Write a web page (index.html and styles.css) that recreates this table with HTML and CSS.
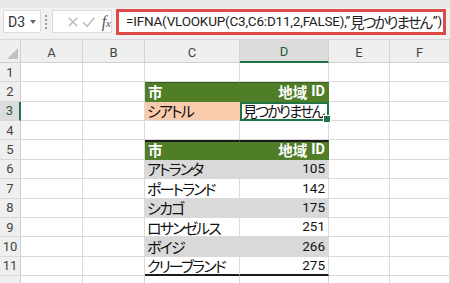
FILE: index.html
```html
<!DOCTYPE html>
<html lang="ja">
<head>
<meta charset="utf-8">
<link rel="stylesheet" href="styles.css">
</head>
<body>
<div class="app">
  <div class="fbar">
    <div class="namebox"><span class="nb-text">D3</span><span class="nb-arrow"></span></div>
    <div class="grip"></div>
    <div class="fnbtns">
      <svg class="ic" width="14" height="14" viewBox="0 0 14 14"><path d="M2 2 L12 12 M12 2 L2 12" stroke="#bdbdbd" stroke-width="1.8" fill="none"/></svg>
      <svg class="ic" width="16" height="14" viewBox="0 0 16 14"><path d="M1.5 7.5 L6 12 L14.5 2" stroke="#bdbdbd" stroke-width="1.8" fill="none"/></svg>
      <span class="fx">f<span class="fx-x">x</span></span>
    </div>
    <div class="formula">=IFNA(VLOOKUP(C3,C6:D11,2,FALSE),”<span class="fjp">見つかりません</span>”)</div>
  </div>
  <div class="sheet">
    <div class="corner"><span class="tri"></span></div>
    <div class="ch">A</div><div class="ch">B</div><div class="ch">C</div><div class="ch sel">D</div><div class="ch">E</div><div class="ch">F</div>

    <div class="rh">1</div><div class="c"></div><div class="c"></div><div class="c"></div><div class="c"></div><div class="c"></div><div class="c"></div>

    <div class="rh">2</div><div class="c"></div><div class="c"></div><div class="c hd hdl">市</div><div class="c hd hdr">地域 <span class="id">ID</span></div><div class="c"></div><div class="c"></div>

    <div class="rh sel">3</div><div class="c"></div><div class="c"></div><div class="c jp orange">シアトル</div><div class="c jp active">見つかりません</div><div class="c"></div><div class="c"></div>

    <div class="rh">4</div><div class="c"></div><div class="c"></div><div class="c"></div><div class="c"></div><div class="c"></div><div class="c"></div>

    <div class="rh">5</div><div class="c"></div><div class="c"></div><div class="c hd hdl top">市</div><div class="c hd hdr top">地域 <span class="id">ID</span></div><div class="c"></div><div class="c"></div>

    <div class="rh">6</div><div class="c"></div><div class="c"></div><div class="c jp band">アトランタ</div><div class="c num band">105</div><div class="c"></div><div class="c"></div>

    <div class="rh">7</div><div class="c"></div><div class="c"></div><div class="c jp">ポートランド</div><div class="c num">142</div><div class="c"></div><div class="c"></div>

    <div class="rh">8</div><div class="c"></div><div class="c"></div><div class="c jp band">シカゴ</div><div class="c num band">175</div><div class="c"></div><div class="c"></div>

    <div class="rh">9</div><div class="c"></div><div class="c"></div><div class="c jp">ロサンゼルス</div><div class="c num">251</div><div class="c"></div><div class="c"></div>

    <div class="rh">10</div><div class="c"></div><div class="c"></div><div class="c jp band">ボイジ</div><div class="c num band">266</div><div class="c"></div><div class="c"></div>

    <div class="rh">11</div><div class="c"></div><div class="c"></div><div class="c jp last">クリーブランド</div><div class="c num last">275</div><div class="c"></div><div class="c"></div>

    <div class="rh"></div><div class="c"></div><div class="c"></div><div class="c"></div><div class="c"></div><div class="c"></div><div class="c"></div>
  </div>
</div>
</body>
</html>
```

FILE: styles.css
```css
* { box-sizing: border-box; }
html, body { margin: 0; padding: 0; }
body {
  width: 450px;
  height: 283px;
  overflow: hidden;
  background: #ffffff;
  font-family: "Roboto", "Liberation Sans", "Noto Sans CJK JP", sans-serif;
}
.app { width: 450px; height: 283px; overflow: hidden; }

.fbar {
  height: 40px;
  background: #f1f1f1;
  border-top: 8px solid #e7e7e7;
  border-bottom: 1px solid #d6d6d6;
  display: flex;
  align-items: flex-start;
  padding: 2px 0 0 3px;
}
.namebox {
  width: 38px;
  height: 23px;
  background: #fff;
  border: 1px solid #dcdcdc;
  display: flex;
  align-items: center;
  padding-left: 4px;
  gap: 5px;
}
.nb-text { font-size: 14px; color: #333; }
.nb-arrow {
  width: 0; height: 0;
  border-left: 3.5px solid transparent;
  border-right: 3.5px solid transparent;
  border-top: 4px solid #666;
}
.grip {
  width: 2px;
  height: 16px;
  margin: 4px 5px 0 4px;
  background-image: radial-gradient(circle, #9a9a9a 0.8px, transparent 1px);
  background-size: 2px 4px;
}
.fnbtns {
  width: 60px;
  height: 23px;
  background: #fff;
  border: 1px solid #dcdcdc;
  display: flex;
  align-items: center;
  padding-left: 14px;
  gap: 3px;
}
.ic { display: block; }
.fx {
  font-family: "Liberation Serif", serif;
  font-style: italic;
  font-size: 16px;
  color: #555;
  margin-left: 3px;
  line-height: 1;
}
.fx-x { font-size: 11px; }
.formula {
  margin-left: 4px;
  width: 330px;
  height: 26px;
  margin-top: -1px;
  border: 3px solid #dd4b45;
  background: #fff;
  font-size: 13.5px;
  line-height: 1;
  color: #222;
  display: flex;
  align-items: center;
  padding-left: 7px;
  white-space: nowrap;
  font-family: "Roboto", "Noto Sans CJK JP", sans-serif;
  letter-spacing: -0.2px;
}
.fjp {
  font-family: "Noto Sans CJK JP", sans-serif;
  font-size: 14.5px;
  letter-spacing: -2px;
  font-feature-settings: "palt";
  margin-right: 2px;
}

.sheet {
  display: grid;
  grid-template-columns: 21px 62px 62px 95px 89px 61px 60px;
  grid-template-rows: 23px repeat(12, 19.36px);
}
.corner {
  background: #efefef;
  border-right: 1px solid #cfcfcf;
  border-bottom: 1px solid #cfcfcf;
  position: relative;
}
.tri {
  position: absolute;
  right: 2px;
  bottom: 3px;
  width: 0; height: 0;
  border-left: 11px solid transparent;
  border-bottom: 11px solid #c2c2c2;
}
.ch {
  background: #efefef;
  border-right: 1px solid #d2d2d2;
  border-bottom: 1px solid #cfcfcf;
  font-size: 13px;
  color: #444;
  display: flex;
  align-items: center;
  justify-content: center;
  padding-top: 2px;
}
.ch.sel {
  background: #dcdcdc;
  border-bottom: 2px solid #217346;
  color: #1e5e3a;
}
.rh {
  background: #efefef;
  border-right: 1px solid #cfcfcf;
  border-bottom: 1px solid #d9d9d9;
  font-size: 13px;
  line-height: 1;
  color: #444;
  display: flex;
  align-items: center;
  justify-content: center;
}
.rh.sel {
  background: #dcdcdc;
  border-right: 2px solid #217346;
  color: #1e5e3a;
}
.c {
  border-right: 1px solid #dadada;
  border-bottom: 1px solid #dadada;
  font-size: 14px;
  line-height: 1;
  color: #111;
  display: flex;
  align-items: center;
  white-space: nowrap;
  padding: 0 2px;
  font-family: "Noto Sans CJK JP", sans-serif;
}
.jp {
  font-size: 15px;
  letter-spacing: -1.9px;
  font-feature-settings: "palt";
}
.hd {
  background: #507d27;
  color: #fff;
  font-weight: bold;
  font-size: 14.5px;
  border-right-color: #507d27;
  border-bottom-color: #507d27;
  border-top: 1px solid #3a5c1c;
}
.hd.top { border-top: 2px solid #1b1b1b; }
.hdl { padding-left: 3px; }
.hdr { justify-content: flex-end; padding-right: 3px; gap: 4px; }
.id { font-family: "Roboto", "Liberation Sans", sans-serif; font-weight: bold; }
.orange { background: #f8cbad; border-right-color: #f8cbad; }
.active {
  position: relative;
  border: 2px solid #217346;
  padding-left: 1px;
  font-size: 14.5px;
  letter-spacing: -2.1px;
}
.active::after {
  content: "";
  position: absolute;
  right: -4px;
  bottom: -4px;
  width: 6px;
  height: 6px;
  background: #217346;
  border: 1px solid #fff;
}
.band { background: #d9d9d9; border-right-color: #d9d9d9; border-bottom-color: #d9d9d9; }
.num {
  justify-content: flex-end;
  font-family: "Roboto", "Liberation Sans", sans-serif;
  font-size: 13.5px;
  padding-right: 3px;
}
.last { border-bottom: 2px solid #1b1b1b; }
```
